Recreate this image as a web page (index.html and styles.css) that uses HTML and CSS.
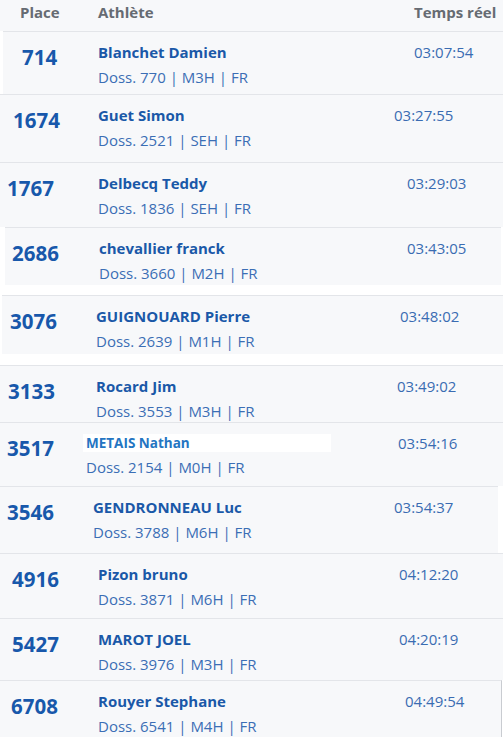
FILE: index.html
```html
<!DOCTYPE html>
<html lang="fr">
<head>
<meta charset="utf-8">
<title>Résultats</title>
<link rel="stylesheet" href="styles.css">
</head>
<body>
<div class="list">
  <div class="head">
    <div class="h-place">Place</div>
    <div class="h-athlete">Athlète</div>
    <div class="h-time">Temps réel</div>
  </div>

  <div class="row r1">
    <div class="place">714</div>
    <div class="athlete"><div class="name">Blanchet Damien</div><div class="meta">Doss. 770 | M3H | FR</div></div>
    <div class="time">03:07:54</div>
  </div>
  <div class="row r2">
    <div class="place">1674</div>
    <div class="athlete"><div class="name">Guet Simon</div><div class="meta">Doss. 2521 | SEH | FR</div></div>
    <div class="time">03:27:55</div>
  </div>
  <div class="row r3">
    <div class="place">1767</div>
    <div class="athlete"><div class="name">Delbecq Teddy</div><div class="meta">Doss. 1836 | SEH | FR</div></div>
    <div class="time">03:29:03</div>
  </div>
  <div class="row r4">
    <div class="place">2686</div>
    <div class="athlete"><div class="name">chevallier franck</div><div class="meta">Doss. 3660 | M2H | FR</div></div>
    <div class="time">03:43:05</div>
  </div>
  <div class="row r5">
    <div class="place">3076</div>
    <div class="athlete"><div class="name">GUIGNOUARD Pierre</div><div class="meta">Doss. 2639 | M1H | FR</div></div>
    <div class="time">03:48:02</div>
  </div>
  <div class="row r6">
    <div class="place">3133</div>
    <div class="athlete"><div class="name">Rocard Jim</div><div class="meta">Doss. 3553 | M3H | FR</div></div>
    <div class="time">03:49:02</div>
  </div>
  <div class="row r7">
    <div class="place">3517</div>
    <div class="athlete"><div class="name name-alt"><span>METAIS Nathan</span></div><div class="meta">Doss. 2154 | M0H | FR</div></div>
    <div class="time">03:54:16</div>
  </div>
  <div class="row r8">
    <div class="place">3546</div>
    <div class="athlete"><div class="name">GENDRONNEAU Luc</div><div class="meta">Doss. 3788 | M6H | FR</div></div>
    <div class="time">03:54:37</div>
  </div>
  <div class="row r9">
    <div class="place">4916</div>
    <div class="athlete"><div class="name">Pizon bruno</div><div class="meta">Doss. 3871 | M6H | FR</div></div>
    <div class="time">04:12:20</div>
  </div>
  <div class="row r10">
    <div class="place">5427</div>
    <div class="athlete"><div class="name">MAROT JOEL</div><div class="meta">Doss. 3976 | M3H | FR</div></div>
    <div class="time">04:20:19</div>
  </div>
  <div class="row r11">
    <div class="place">6708</div>
    <div class="athlete"><div class="name">Rouyer Stephane</div><div class="meta">Doss. 6541 | M4H | FR</div></div>
    <div class="time">04:49:54</div>
  </div>
</div>
</body>
</html>
```

FILE: styles.css
```css
html, body {
  margin: 0;
  padding: 0;
  background: #ffffff;
}

body {
  font-family: "Open Sans", "Noto Sans", sans-serif;
  width: 503px;
  height: 744px;
  overflow: hidden;
}

.list {
  display: flex;
  flex-direction: column;
}

.head {
  display: flex;
  height: 31px;
  background: #f7f8fa;
  color: #666b72;
  font-weight: 700;
  font-size: 15px;
  line-height: 20px;
}

.h-place {
  margin: 2px 0 0 20px;
  width: 78px;
}

.h-athlete {
  margin-top: 2px;
  width: 316px;
}

.h-time {
  margin-top: 2px;
}

.row {
  --sl: 0px;
  --sr: 0px;
  display: flex;
  align-items: flex-start;
  box-sizing: border-box;
  height: var(--h);
  margin-left: var(--sl);
  margin-right: var(--sr);
  margin-bottom: var(--gap, 0px);
  border-top: 1px solid #e3e5e9;
  background: #f7f8fa;
}

.place {
  margin-left: calc(var(--px) - var(--sl));
  width: calc(var(--ax) - var(--px));
  margin-top: 13px;
  flex-shrink: 0;
  font-weight: 700;
  font-size: 20.5px;
  line-height: 24px;
  color: #1858ab;
}

.athlete {
  width: calc(var(--tx) - var(--ax));
  margin-top: 10px;
  flex-shrink: 0;
}

.name {
  font-weight: 700;
  font-size: 15px;
  line-height: 20px;
  color: #1a58a8;
  white-space: nowrap;
}

.meta {
  margin-top: 5px;
  font-size: 15px;
  line-height: 20px;
  color: #3b6eb5;
  white-space: nowrap;
}

.time {
  margin-top: 10px;
  font-size: 15px;
  line-height: 20px;
  color: #3a6cb2;
  white-space: nowrap;
}

.name-alt {
  margin-left: -3px;
  width: 248px;
  height: 18px;
  margin-top: 1px;
  margin-bottom: 1px;
  background: #ffffff;
}

.name-alt span {
  display: block;
  padding-left: 3px;
  font-size: 13.5px;
  line-height: 18px;
  color: #2475c2;
}

.r1  { --h: 63px; --px: 22px; --ax: 98px; --tx: 414px; --sl: 3px; }
.r2  { --h: 68px; --px: 13px; --ax: 98px; --tx: 394px; }
.r3  { --h: 65px; --px: 7px;  --ax: 98px; --tx: 407px; }
.r4  { --h: 58px; --px: 12px; --ax: 99px; --tx: 407px; --sl: 5px; --sr: 2px; --gap: 10px; }
.r5  { --h: 59px; --px: 10px; --ax: 96px; --tx: 400px; --sl: 2px; --gap: 11px; }
.r6  { --h: 57px; --px: 8px;  --ax: 96px; --tx: 397px; }
.r7  { --h: 64px; --px: 7px;  --ax: 86px; --tx: 398px; }
.r8  { --h: 67px; --px: 7px;  --ax: 93px; --tx: 394px; --sr: 5px; }
.r9  { --h: 65px; --px: 12px; --ax: 98px; --tx: 399px; }
.r10 { --h: 62px; --px: 12px; --ax: 98px; --tx: 399px; }
.r11 { --h: 57px; --px: 11px; --ax: 98px; --tx: 405px; --sr: 1px; border-right: 1px solid #c9ccd1; }
```
